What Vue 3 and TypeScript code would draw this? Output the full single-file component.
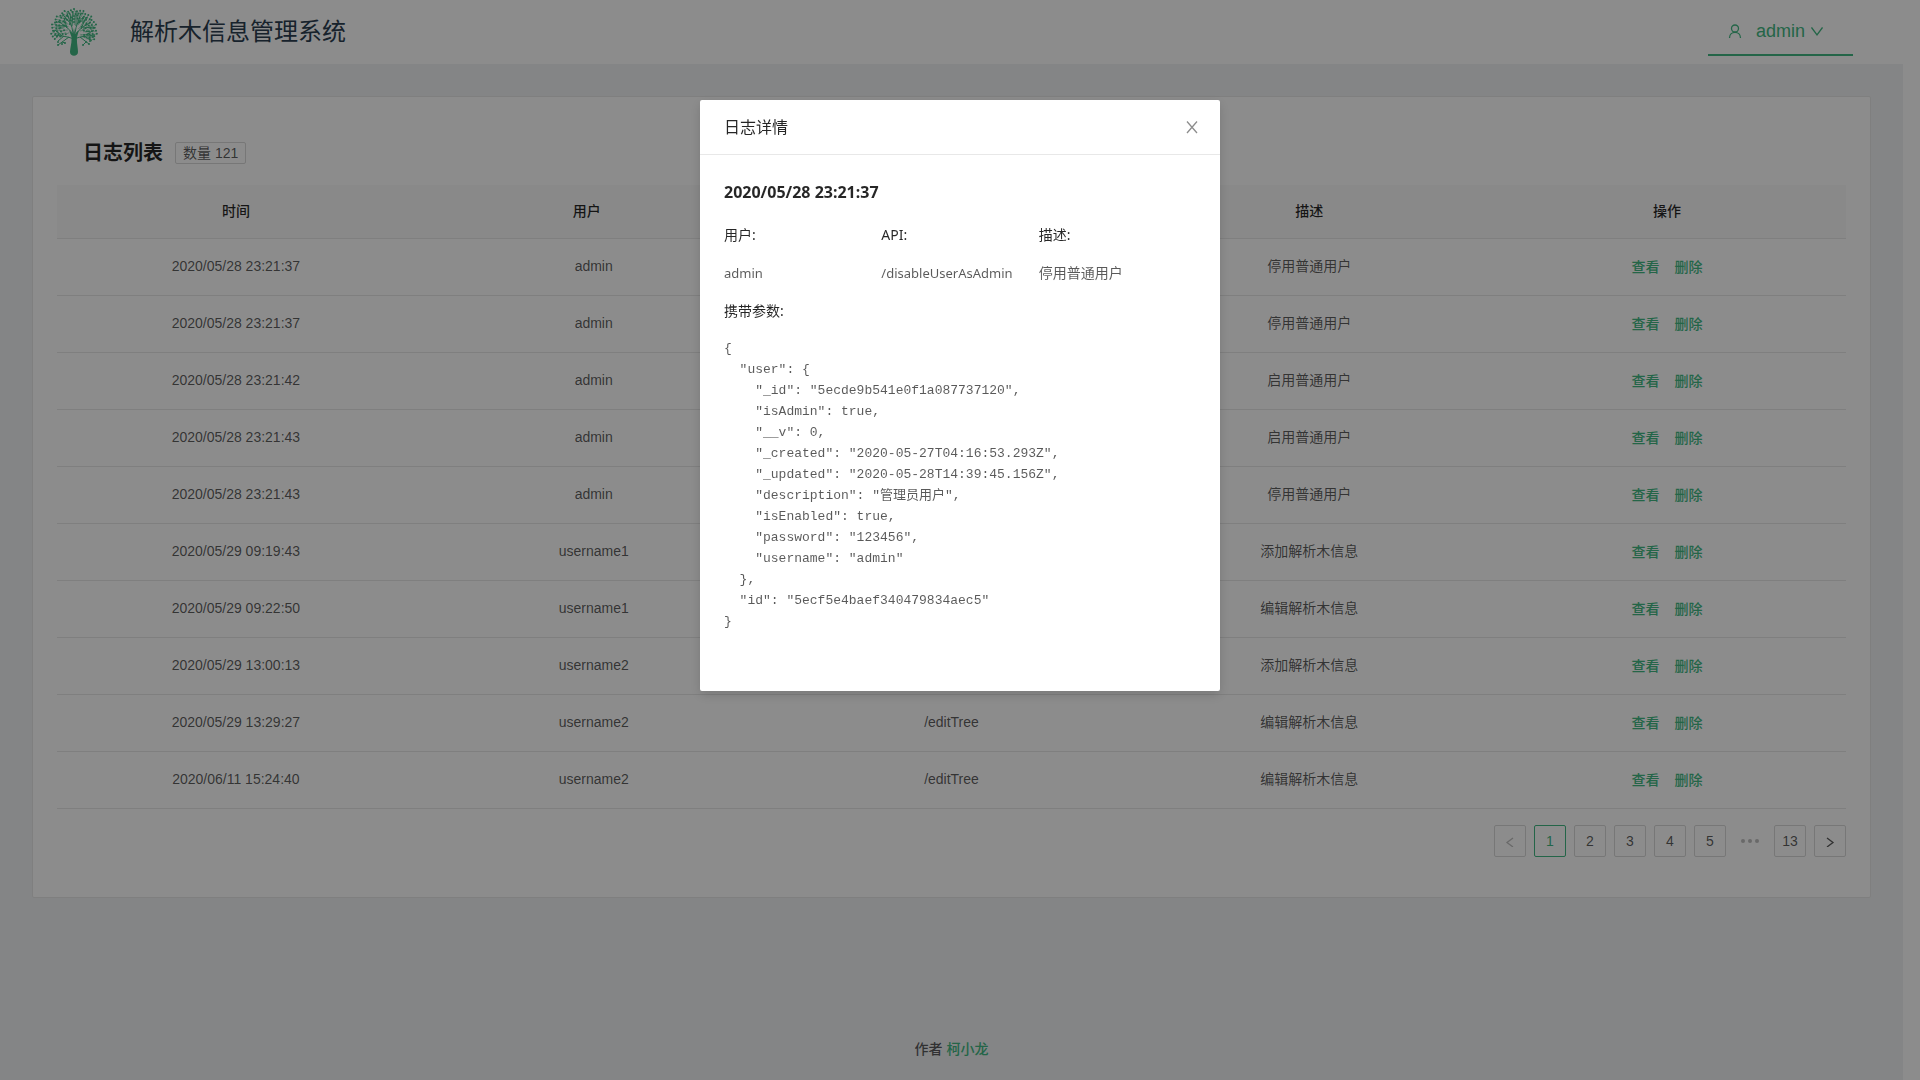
<script setup lang="ts">
import { computed, ref } from 'vue'

interface LogRow {
  time: string
  user: string
  api?: string
  description: string
}

const total = 121
const rows: LogRow[] = [
  { time: '2020/05/28 23:21:37', user: 'admin', description: '停用普通用户' },
  { time: '2020/05/28 23:21:37', user: 'admin', description: '停用普通用户' },
  { time: '2020/05/28 23:21:42', user: 'admin', description: '启用普通用户' },
  { time: '2020/05/28 23:21:43', user: 'admin', description: '启用普通用户' },
  { time: '2020/05/28 23:21:43', user: 'admin', description: '停用普通用户' },
  { time: '2020/05/29 09:19:43', user: 'username1', description: '添加解析木信息' },
  { time: '2020/05/29 09:22:50', user: 'username1', description: '编辑解析木信息' },
  { time: '2020/05/29 13:00:13', user: 'username2', description: '添加解析木信息' },
  { time: '2020/05/29 13:29:27', user: 'username2', api: '/editTree', description: '编辑解析木信息' },
  { time: '2020/06/11 15:24:40', user: 'username2', api: '/editTree', description: '编辑解析木信息' },
]

const pages = [1, 2, 3, 4, 5]
const current = ref(1)
const open = ref(true)
const selected = ref<LogRow>({ ...rows[0], api: '/disableUserAsAdmin' })

const params = {
  user: {
    _id: '5ecde9b541e0f1a087737120',
    isAdmin: true,
    __v: 0,
    _created: '2020-05-27T04:16:53.293Z',
    _updated: '2020-05-28T14:39:45.156Z',
    description: '管理员用户',
    isEnabled: true,
    password: '123456',
    username: 'admin',
  },
  id: '5ecf5e4baef340479834aec5',
}
const paramsText = computed(() => JSON.stringify(params, null, 2))

function show(row: LogRow) {
  selected.value = row
  open.value = true
}

// Crown of the logo: every leaf hangs on a short twig that points to the trunk.
interface Leaf { x: number; y: number; twig: string }
const leaves: Leaf[] = []
const rings = [
  { r: 22, n: 29 },
  { r: 19, n: 25 },
  { r: 16, n: 21 },
  { r: 13, n: 16 },
  { r: 10, n: 9 },
]
rings.forEach((ring, k) => {
  for (let i = 0; i < ring.n; i++) {
    const a = Math.PI * (0.87 + (1.26 * (i + (k % 2) / 2)) / (ring.n - 1))
    const r = ring.r + ((i * 7) % 3) - 1
    const x = 24 + r * Math.cos(a)
    const y = 23 + (r - 1) * Math.sin(a)
    const tx = 24 + (r - 4) * Math.cos(a + 0.08)
    const ty = 23 + (r - 4) * Math.sin(a + 0.08)
    leaves.push({ x, y, twig: `M${x} ${y} L${tx} ${ty}` })
  }
})
</script>

<template>
  <div class="page">
    <header class="header">
      <svg class="logo" viewBox="0 0 48 48" aria-hidden="true">
        <path class="trunk" d="M19 22 L21.500 29 C22 35 20 40 20 44 C20 49 28 49 28 44 C28 40 26.500 35 27 29 L29 22 L25 26 L24 20 L23 26 Z" />
        <g class="branches">
          <path d="M24 31 C17 28 10 28 4 27 M14 28 L8 33 M12 28 L5 22 M19 29 L8 37 M12 34 L15 35" />
          <path d="M23 26 C19 20 13 17 8 13 M15 18 L6 18 M17 20 L14 10" />
          <path d="M23 25 C22 17 19 12 17 5 M21 16 L14 8 M22 18 L23 3 M21 13 L20 6" />
          <path d="M25 25 C26 17 29 12 31 5 M27 16 L34 8 M26 18 L26 3 M28 13 L35 13" />
          <path d="M25 27 C30 20 35 18 41 14 M33 20 L43 19 M31 21 L36 9" />
          <path d="M24 31 C31 28 38 28 45 27 M34 28 L42 33 M36 27 L44 22 M30 29 L39 36 M36 34 L33 37" />
        </g>
        <g class="leaves">
          <g v-for="(leaf, i) in leaves" :key="i">
            <path class="twig" :d="leaf.twig" />
            <circle :cx="leaf.x" :cy="leaf.y" r="1" />
          </g>
          <circle cx="8" cy="34" r="1" /><circle cx="8" cy="37" r="1" /><circle cx="12" cy="36" r="1" />
          <circle cx="15" cy="35" r="1" /><circle cx="40" cy="33" r="1" /><circle cx="39" cy="36" r="1" />
          <circle cx="33" cy="37" r="1" /><circle cx="36" cy="34" r="1" />
        </g>
      </svg>
      <h1 class="brand">解析木信息管理系统</h1>
      <button class="account" type="button">
        <svg class="user-icon" viewBox="0 0 14 14" aria-hidden="true">
          <circle cx="7" cy="4.500" r="3.500" />
          <path d="M1.500 14 C1.500 6.500 12.500 6.500 12.500 14" />
        </svg>
        <span>admin</span>
        <svg class="chevron" viewBox="0 0 12 12" aria-hidden="true"><path d="M0.500 2.500 L6 10 L11.500 2.500" /></svg>
      </button>
    </header>

    <main class="main">
      <section class="card">
        <div class="card-head">
          <h2>日志列表</h2>
          <span class="tag">数量 {{ total }}</span>
        </div>
        <table class="logs">
          <thead>
            <tr>
              <th>时间</th>
              <th class="filterable">用户</th>
              <th></th>
              <th>描述</th>
              <th>操作</th>
            </tr>
          </thead>
          <tbody>
            <tr v-for="(row, i) in rows" :key="i">
              <td>{{ row.time }}</td>
              <td>{{ row.user }}</td>
              <td>{{ row.api }}</td>
              <td>{{ row.description }}</td>
              <td class="ops">
                <div class="actions">
                  <a href="#" @click.prevent="show(row)">查看</a>
                  <a href="#" @click.prevent>删除</a>
                </div>
              </td>
            </tr>
          </tbody>
        </table>
        <nav class="pager" aria-label="分页">
          <button type="button" disabled aria-label="上一页">
            <svg viewBox="0 0 12 12" aria-hidden="true"><path d="M9 3 L3 7.500 L9 12" /></svg>
          </button>
          <button
            v-for="p in pages"
            :key="p"
            type="button"
            :class="{ active: p === current }"
            @click="current = p"
          >{{ p }}</button>
          <span class="dots"><i></i><i></i><i></i></span>
          <button type="button" :class="{ active: current === 13 }" @click="current = 13">13</button>
          <button type="button" aria-label="下一页">
            <svg viewBox="0 0 12 12" aria-hidden="true"><path d="M3 3 L9 7.500 L3 12" /></svg>
          </button>
        </nav>
      </section>
    </main>

    <footer class="footer">作者 <a href="#">柯小龙</a></footer>
  </div>

  <div v-if="open" class="mask">
    <div class="modal" role="dialog" aria-modal="true" aria-labelledby="log-title">
      <div class="modal-head">
        <h2 id="log-title">日志详情</h2>
        <button class="close" type="button" aria-label="关闭" @click="open = false">
          <svg viewBox="0 0 12 12" aria-hidden="true"><path d="M1 0.500 L11 12 M11 0.500 L1 12" /></svg>
        </button>
      </div>
      <div class="modal-body">
        <h3>{{ selected.time }}</h3>
        <div class="fields">
          <dl><dt>用户:</dt><dd class="latin">{{ selected.user }}</dd></dl>
          <dl><dt>API:</dt><dd class="latin">{{ selected.api }}</dd></dl>
          <dl><dt>描述:</dt><dd>{{ selected.description }}</dd></dl>
        </div>
        <p class="label">携带参数:</p>
        <pre>{{ paramsText }}</pre>
      </div>
    </div>
  </div>
</template>

<style>
body {
  margin: 0;
  background: #fff;
}
</style>

<style scoped>
.page {
  box-sizing: border-box;
  min-height: 100vh;
  padding-right: 17px;
  display: flex;
  flex-direction: column;
  font: 14px/22px "Liberation Sans", "Noto Sans CJK SC", sans-serif;
  color: rgba(0, 0, 0, 0.65);
}
h1, h2, h3, dl, dd, p, pre {
  margin: 0;
}
a {
  color: #42b983;
  text-decoration: none;
}
button {
  font: inherit;
  color: inherit;
  background: none;
  cursor: pointer;
}
.header {
  box-sizing: border-box;
  height: 64px;
  padding: 0 50px;
  display: flex;
  align-items: center;
}
.logo {
  width: 48px;
  height: 48px;
  margin-right: 32px;
}
.trunk, .leaves {
  fill: #42b983;
}
.branches, .twig {
  fill: none;
  stroke: #42b983;
}
.twig {
  stroke-opacity: 0.5;
}
.brand {
  font-size: 24px;
  line-height: 32px;
  font-weight: 400;
  color: #2c3e50;
}
.account {
  box-sizing: border-box;
  margin-left: auto;
  height: 48px;
  padding: 0 30px 0 20px;
  display: flex;
  align-items: center;
  border: 0;
  border-bottom: 2px solid #42b983;
  color: #42b983;
  font-size: 18px;
}
.user-icon {
  width: 14px;
  height: 14px;
  margin-right: 14px;
}
.chevron {
  width: 12px;
  height: 12px;
  margin-left: 6px;
}
svg {
  flex: none;
}
.account svg, .pager svg, .close svg {
  fill: none;
  stroke: currentColor;
  stroke-width: 1.3;
}
.main {
  flex: 1;
  padding: 32px;
  background: #f0f2f5;
}
.card {
  padding: 23px 24px 40px;
  background: #fff;
  border: 1px solid #e8e8e8;
  border-radius: 2px;
}
.card-head {
  height: 65px;
  padding-left: 26px;
  display: flex;
  align-items: center;
  gap: 12px;
}
.card-head h2 {
  font-size: 20px;
  line-height: 32px;
  font-weight: 700;
  color: rgba(0, 0, 0, 0.85);
}
.tag {
  padding: 0 7px;
  line-height: 20px;
  border: 1px solid #d9d9d9;
  border-radius: 2px;
}
.logs {
  width: 100%;
  table-layout: fixed;
  border-collapse: separate;
  border-spacing: 0;
  text-align: center;
}
th, td {
  box-sizing: border-box;
  padding: 0 16px 2px;
  border-bottom: 1px solid #e8e8e8;
}
th {
  height: 54px;
  background: #fafafa;
  font-weight: 500;
  color: rgba(0, 0, 0, 0.85);
}
.filterable {
  padding-right: 30px;
}
td {
  height: 57px;
}
.ops {
  padding-bottom: 0;
}
.actions {
  display: flex;
  justify-content: center;
  gap: 15px;
  font-weight: 500;
}
.pager {
  margin-top: 16px;
  display: flex;
  justify-content: flex-end;
  gap: 8px;
}
.pager button {
  width: 32px;
  height: 32px;
  padding: 0;
  display: flex;
  align-items: center;
  justify-content: center;
  border: 1px solid #d9d9d9;
  border-radius: 2px;
}
.pager svg {
  width: 12px;
  height: 12px;
}
.pager button:disabled {
  color: rgba(0, 0, 0, 0.25);
}
.pager .active {
  border-color: #42b983;
  color: #42b983;
}
.dots {
  width: 32px;
  display: flex;
  align-items: center;
  justify-content: center;
  gap: 3px;
}
.dots i {
  width: 4px;
  height: 4px;
  border-radius: 50%;
  background: rgba(0, 0, 0, 0.25);
}
.footer {
  padding: 24px 0 20px;
  background: #f0f2f5;
  text-align: center;
  font-weight: 500;
}
.mask {
  position: fixed;
  inset: 0;
  display: flex;
  align-items: flex-start;
  justify-content: center;
  background: rgba(0, 0, 0, 0.45);
  font: 14px/22px "Noto Sans", "Noto Sans CJK SC", sans-serif;
  color: rgba(0, 0, 0, 0.65);
}
.modal {
  width: 520px;
  margin-top: 100px;
  background: #fff;
  border-radius: 2px;
  box-shadow: 0 4px 12px rgba(0, 0, 0, 0.15);
}
.modal-head {
  padding: 16px 20px 16px 24px;
  display: flex;
  align-items: center;
  justify-content: space-between;
  border-bottom: 1px solid #e8e8e8;
}
.modal-head h2 {
  font-size: 16px;
  line-height: 22px;
  font-weight: 400;
  color: rgba(0, 0, 0, 0.85);
}
.close {
  width: 16px;
  height: 16px;
  padding: 2px;
  border: 0;
  display: flex;
  color: rgba(0, 0, 0, 0.45);
}
.close svg {
  width: 12px;
  height: 12px;
  overflow: visible;
}
.modal-body {
  padding: 25px 24px 59px;
}
h3 {
  margin-bottom: 20px;
  font-size: 16px;
  line-height: 24px;
  font-weight: 700;
  color: rgba(0, 0, 0, 0.85);
}
.fields {
  display: grid;
  grid-template-columns: repeat(3, 1fr);
}
dt, .label {
  margin-bottom: 16px;
  color: rgba(0, 0, 0, 0.85);
}
dd {
  margin-bottom: 16px;
}
.latin {
  font-size: 13px;
}
pre {
  font: 13px/21px "Liberation Mono", "Noto Sans CJK SC", monospace;
}
</style>
